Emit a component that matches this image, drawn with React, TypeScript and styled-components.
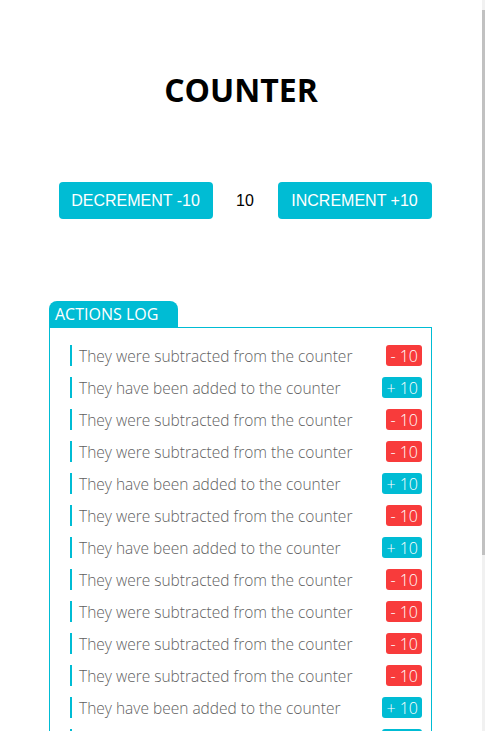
import { FC } from 'react';
import styled, { createGlobalStyle } from 'styled-components';

const GlobalStyle = createGlobalStyle`
    html, body {
        overflow: hidden;
    }
    body {
        margin: 0;
        background: #fff;
        font-family: 'Open Sans', 'Noto Sans', sans-serif;
    }
`;

const ScrollTrack = styled.div`
    position: fixed;
    top: 0;
    right: 0;
    width: 3px;
    height: 100vh;
    background: #f1f1f1;
`;

const ScrollThumb = styled.div`
    margin-top: 10px;
    height: 545px;
    background: #c1c1c1;
`;

const Page = styled.div`
    display: flex;
    flex-direction: column;
    align-items: center;
    padding-top: 68px;
    padding-bottom: 40px;
    margin-right: 3px;
`;

const Title = styled.h1`
    margin: 0;
    font-size: 32px;
    font-weight: 700;
    color: #000;
`;

const CounterRow = styled.div`
    display: flex;
    align-items: center;
    margin-top: 71px;
    margin-left: 8px;
`;

const CounterButton = styled.button`
    height: 37px;
    width: 154px;
    border: none;
    border-radius: 4px;
    background-color: #00bcd4;
    color: #fff;
    font-family: 'Liberation Sans', Arial, sans-serif;
    font-size: 16px;
    padding: 0;
    cursor: pointer;
`;

const CounterValue = styled.span`
    font-family: 'Liberation Sans', Arial, sans-serif;
    font-size: 16px;
    color: #000;
    width: 65px;
    text-align: center;
`;

const LogSection = styled.section`
    width: 383px;
    margin-top: 82px;
    margin-right: 1px;
`;

const LogTab = styled.div`
    width: 129px;
    height: 26px;
    box-sizing: border-box;
    padding-left: 6px;
    display: flex;
    align-items: center;
    border-radius: 8px 8px 0 0;
    background-color: #00bcd4;
    color: #fff;
    font-size: 16px;
`;

const LogBox = styled.div`
    border: 1px solid #00bcd4;
    padding: 17px 9px 10px 20px;
    display: flex;
    flex-direction: column;
    gap: 11px;
`;

const LogRow = styled.div`
    display: flex;
    align-items: center;
    justify-content: space-between;
    height: 21px;
`;

const LogText = styled.div`
    height: 21px;
    border-left: 2px solid #00bcd4;
    padding-left: 7px;
    display: flex;
    align-items: center;
    font-size: 15.5px;
    font-weight: 300;
    color: #5f5f5f;
`;

const Badge = styled.span<{ $added: boolean }>`
    height: 21px;
    padding: 0 4px;
    display: flex;
    align-items: center;
    border-radius: 3px;
    background-color: ${({ $added }) => ($added ? '#00bcd4' : '#f83b3b')};
    color: #fff;
    font-size: 16px;
    font-weight: 300;
`;

const log: boolean[] = [
    false, true, false, false, true, false, true, false, false, false, false, true,
    true, false, true, false, false, true, false,
];

const App: FC = () => {
    return (
        <>
            <GlobalStyle />
            <Page>
                <Title>COUNTER</Title>
                <CounterRow>
                    <CounterButton>DECREMENT -10</CounterButton>
                    <CounterValue>10</CounterValue>
                    <CounterButton>INCREMENT +10</CounterButton>
                </CounterRow>
                <LogSection>
                    <LogTab>ACTIONS LOG</LogTab>
                    <LogBox>
                        {log.map((added, i) => (
                            <LogRow key={i}>
                                <LogText>
                                    {added
                                        ? 'They have been added to the counter'
                                        : 'They were subtracted from the counter'}
                                </LogText>
                                <Badge $added={added}>{added ? '+ 10' : '- 10'}</Badge>
                            </LogRow>
                        ))}
                    </LogBox>
                </LogSection>
            </Page>
            <ScrollTrack>
                <ScrollThumb />
            </ScrollTrack>
        </>
    );
};

export default App;
